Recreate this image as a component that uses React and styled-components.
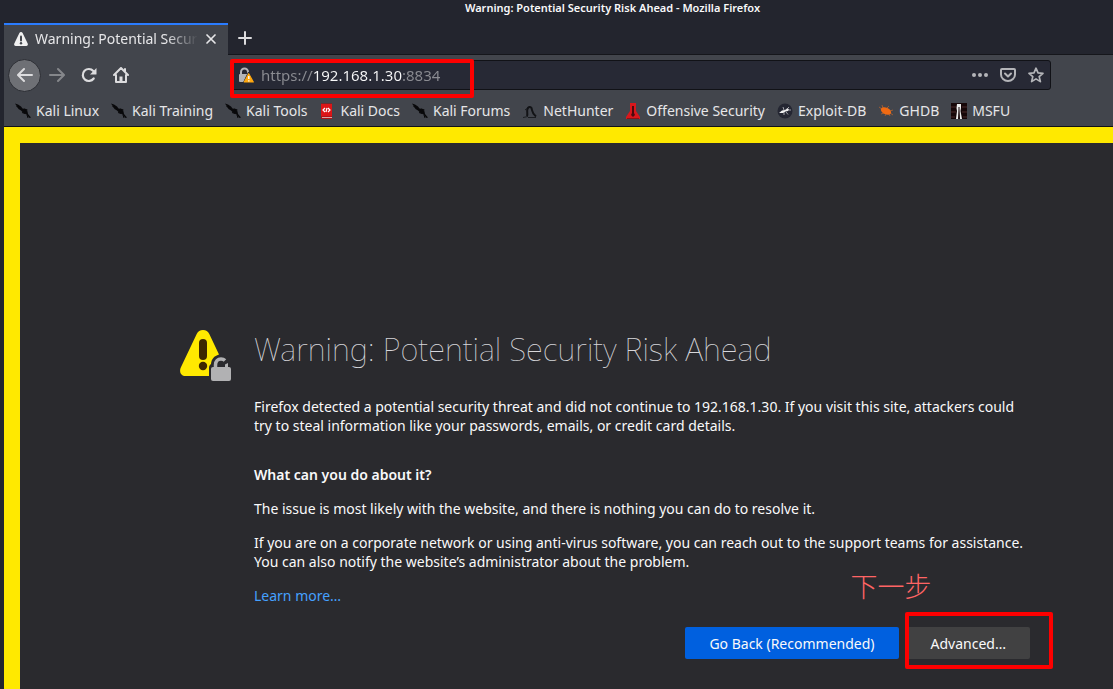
import React from 'react';
import styled, { createGlobalStyle } from 'styled-components';

const GlobalStyle = createGlobalStyle`
	* {
		box-sizing: border-box;
	}
	html,
	body,
	#root {
		height: 100%;
		margin: 0;
	}
	body {
		overflow: hidden;
		background-color: #23252e;
		color: #f9f9fa;
		font-family: 'Noto Sans', 'Noto Sans CJK SC', sans-serif;
		font-size: 14px;
	}
	button,
	input {
		font: inherit;
	}
	h1,
	h2,
	p {
		margin: 0;
	}
	svg {
		display: block;
		flex: none;
	}
`;

const Window = styled.div`
	display: flex;
	flex-direction: column;
	height: 100%;
	padding-left: 4px;
`;

const TitleBar = styled.header`
	height: 23px;
	padding-left: 108px;
	text-align: center;
	font-size: 11px;
	font-weight: 600;
	line-height: 16px;
`;

const TabStrip = styled.div`
	display: flex;
	height: 32px;
	border-bottom: 1px solid #15161b;
`;

const Tab = styled.div`
	display: flex;
	align-items: center;
	width: 224px;
	height: 32px;
	padding: 0 8px 3px 9px;
	background-color: #42454c;
	border-top: 2px solid #2a7cff;
	color: #e6e6e8;
	span {
		flex: 1;
		margin: 0 4px 0 6px;
		overflow: hidden;
		white-space: nowrap;
		mask-image: linear-gradient(to left, transparent, #000 32px);
	}
`;

const IconButton = styled.button`
	display: flex;
	align-items: center;
	justify-content: center;
	width: ${props => props.$size || 32}px;
	height: ${props => props.$size || 32}px;
	padding: 0;
	border: ${props => (props.$round ? '1px solid #2c2e34' : 0)};
	border-radius: ${props => (props.$round ? '50%' : '2px')};
	background-color: ${props => (props.$round ? '#6e7075' : 'transparent')};
	color: ${props => (props.disabled ? '#85878b' : '#dcdcde')};
`;

const NewTab = styled(IconButton)`
	height: 30px;
	margin-left: 1px;
`;

const NavBar = styled.nav`
	display: flex;
	align-items: center;
	height: 40px;
	padding: 0 62px 0 4px;
	background-color: #42454c;
`;

const AddressBar = styled.div`
	position: relative;
	display: flex;
	flex: 1;
	align-items: center;
	height: 30px;
	margin-left: 94px;
	padding: 0 0 0 6px;
	background-color: #272935;
	border: 1px solid #111217;
	border-radius: 3px;
	/* scheme and port are dimmed, the host stays bright */
	input {
		flex: 1;
		min-width: 0;
		padding: 0 0 0 7px;
		border: 0;
		outline: 0;
		color: transparent;
		font-size: 15px;
		background: linear-gradient(to right, #8b8c92 58px, #f9f9fa 58px, #f9f9fa 149px, #8b8c92 149px);
		background-clip: text;
	}
`;

const Highlight = styled.span`
	position: absolute;
	top: ${props => props.$top}px;
	left: ${props => props.$left}px;
	width: ${props => props.$width}px;
	height: ${props => props.$height}px;
	border: 4px solid #fe0000;
	border-radius: 2px;
	pointer-events: none;
`;

const Bookmarks = styled.nav`
	display: flex;
	align-items: center;
	gap: 12px;
	height: 32px;
	padding-left: 11px;
	background-color: #42454c;
	border-bottom: 1px solid #111217;
	a {
		display: flex;
		align-items: center;
		gap: 5px;
		color: #e6e6e8;
		line-height: 20px;
		text-decoration: none;
		white-space: nowrap;
	}
`;

const Page = styled.main`
	flex: 1;
	min-height: 0;
	padding: 180px 20px 0 160px;
	background-color: #2a2a2e;
	border-top: 16px solid #ffe900;
	border-left: 16px solid #ffe900;
	overflow: hidden;
`;

const Warning = styled.section`
	display: grid;
	grid-template-columns: 54px minmax(0, 776px);
	column-gap: 20px;
	& > svg {
		margin-top: 6px;
	}
	h1 {
		color: #d7d7db;
		font-size: 31px;
		font-weight: 100;
		line-height: 52px;
		white-space: nowrap;
	}
	h2 {
		margin-top: 30px;
		font-size: 14px;
		font-weight: 600;
		line-height: 19px;
	}
	p {
		margin-top: 15px;
		line-height: 19px;
	}
	h1 + p {
		margin-top: 22px;
	}
	a {
		color: #45a1ff;
		text-decoration: none;
	}
`;

const Actions = styled.div`
	display: flex;
	justify-content: flex-end;
	gap: 8px;
	margin-top: 22px;
`;

const ActionButton = styled.button`
	height: 32px;
	padding: 0 24px;
	border: 0;
	border-radius: 2px;
	background-color: ${props => (props.$primary ? '#0060df' : '#414142')};
	color: #f9f9fa;
`;

const AdvancedWrap = styled.div`
	position: relative;
	display: flex;
`;

const Note = styled.span`
	position: absolute;
	top: -55px;
	left: -56px;
	color: #ff6464;
	font-family: 'Noto Sans CJK SC', sans-serif;
	font-size: 27px;
	font-weight: 300;
	line-height: 27px;
	white-space: nowrap;
`;

const WarnGlyph = () => (
	<svg width="16" height="16" viewBox="0 0 16 16">
		<path d="M8 1c-.7 0-1.3.4-1.600 1L1.300 12.600c-.6 1.200.2 2.400 1.500 2.400h10.400c1.300 0 2.100-1.200 1.500-2.400L9.600 2c-.3-.6-.9-1-1.600-1z" fill="#f0f0f0" />
		<path d="M8 5.500v4" stroke="#42454c" strokeWidth="2" strokeLinecap="round" />
		<circle cx="8" cy="12.300" r="1.200" fill="#42454c" />
	</svg>
);

const CloseIcon = () => (
	<svg width="16" height="16" viewBox="0 0 16 16" stroke="#e6e6e8" strokeWidth="1.700" strokeLinecap="round">
		<path d="M4 4l8 8M12 4l-8 8" />
	</svg>
);

const PlusIcon = () => (
	<svg width="16" height="16" viewBox="0 0 16 16" stroke="currentColor" strokeWidth="2" strokeLinecap="round">
		<path d="M8 2v12M2 8h12" />
	</svg>
);

const ArrowIcon = ({ back }) => (
	<svg width="16" height="16" viewBox="0 0 16 16" fill="none" stroke="currentColor" strokeWidth="2" strokeLinecap="round" strokeLinejoin="round">
		{back ? <path d="M15 8H1.500M7 2L1 8l6 6" /> : <path d="M1 8h13.500M9 2l6 6-6 6" />}
	</svg>
);

const ReloadIcon = () => (
	<svg width="16" height="16" viewBox="0 0 16 16">
		<path d="M12.700 11.500A6 6 0 1 1 12.300 4" fill="none" stroke="currentColor" strokeWidth="2.200" strokeLinecap="round" />
		<path d="M15.500 1v6a.5.5 0 0 1-.5.500H9z" fill="currentColor" />
	</svg>
);

const HomeIcon = () => (
	<svg width="16" height="16" viewBox="0 0 16 16" fill="none" stroke="currentColor" strokeWidth="2" strokeLinecap="round" strokeLinejoin="round">
		<path d="M1 8l7-7 7 7M3 8v7h10V8" />
		<path d="M8 9.500v5" strokeWidth="3" strokeLinecap="butt" />
		<path d="M12 2v2" strokeWidth="2" />
	</svg>
);

const LockWarnIcon = () => (
	<svg width="16" height="16" viewBox="0 0 16 16">
		<path d="M3 8V5a3.500 3.500 0 0 1 7 0v2" fill="none" stroke="#b4b5b9" strokeWidth="2" />
		<rect x="1" y="7" width="10" height="8" rx="1" fill="#b4b5b9" />
		<path d="M10.500 5L5.500 15.500h10z" fill="#272935" stroke="#272935" />
		<path d="M10.700 6.700L6.300 15h9z" fill="#ffa810" stroke="#ffa810" strokeWidth="1.200" strokeLinejoin="round" />
		<path d="M10.800 9v3M10.800 13.300v1.300" stroke="#fff" strokeWidth="1.400" />
	</svg>
);

const DotsIcon = () => (
	<svg width="16" height="16" viewBox="0 0 16 16" fill="#b4b5b9">
		<circle cx="2" cy="8" r="2" />
		<circle cx="8" cy="8" r="2" />
		<circle cx="14" cy="8" r="2" />
	</svg>
);

const PocketIcon = () => (
	<svg width="16" height="16" viewBox="0 0 16 16" fill="none" stroke="#b4b5b9" strokeWidth="2" strokeLinecap="round" strokeLinejoin="round">
		<path d="M2 2h12a1 1 0 0 1 1 1v4.500a7 6.500 0 0 1-14 0V3a1 1 0 0 1 1-1z" />
		<path d="M5 6.500l3 3 3-3" />
	</svg>
);

const StarIcon = () => (
	<svg width="16" height="16" viewBox="0 0 16 16" fill="none" stroke="#b4b5b9" strokeWidth="1.700" strokeLinejoin="round">
		<path d="M8 1.200l2 4.700 5 .4-3.800 3.300 1.200 5L8 11.900l-4.400 2.700 1.200-5L1 6.300l5-.4z" />
	</svg>
);

const KaliIcon = () => (
	<svg width="16" height="16" viewBox="0 0 16 16">
		<path d="M0 .5l3 1 3 2 1.500 2L11 6l1.500 2.500L13 11l3 3.500-1.500.5-3-3.500L8.500 10 6 7.500 3.500 6 2 3.500z" fill="#08080a" />
		<path d="M1.500 3.500L6 5M9 6l3.500 1M7 9.500l3 1M12 12l1 3" stroke="#08080a" />
	</svg>
);

const DocsIcon = () => (
	<svg width="16" height="16" viewBox="0 0 16 16">
		<path d="M2 1l11-1v14H2z" fill="#dc1517" />
		<path d="M2 13h11v3H3a1 1 0 0 1-1-1z" fill="#b01215" />
		<path d="M3 14.500h10" stroke="#d9a5a6" />
		<path d="M2 0h11v1H2z" fill="#73292c" />
		<path d="M6 5L4 7l2 2M9 5l2 2-2 2M8 5L7 9" fill="none" stroke="#fff" strokeWidth="1.200" />
	</svg>
);

const NetHunterIcon = () => (
	<svg width="16" height="16" viewBox="0 0 16 16" fill="none" stroke="#121316">
		<path d="M5 13c1-3-.5-4 .5-7C6 4 8.500 3 9.500 5c1 3 0 5 4.500 8.500" strokeWidth="2" />
		<path d="M1 14.500l5-1M6 14.500h8M3 7l4-3" strokeWidth=".8" />
	</svg>
);

const OffsecIcon = () => (
	<svg width="16" height="16" viewBox="0 0 16 16">
		<path d="M5 0h6v8l4 6v2H1v-2l4-6z" fill="#d8171c" />
		<path d="M8 3v7" stroke="#4b0b0e" strokeWidth="2" />
		<path d="M8 8l-2 4 2 2 2-2z" fill="#4b0b0e" />
		<path d="M2 15.500h12" stroke="#8f1115" />
	</svg>
);

const ExploitIcon = () => (
	<svg width="16" height="16" viewBox="0 0 16 16">
		<circle cx="8" cy="8" r="7.500" fill="#242632" />
		<path d="M2 10l3-2.500 3-.5 2-1.500 2 .5-1 2-2.500.5L6 10z" fill="#f0f0f0" />
		<path d="M9 7l3-3M7 7L6 4M7 9v3M9 9l2 2.500M11 7h3" stroke="#d7d7db" strokeWidth=".7" />
	</svg>
);

const GhdbIcon = () => (
	<svg width="16" height="16" viewBox="0 0 16 16">
		<ellipse cx="8" cy="8" rx="5.500" ry="3.300" transform="rotate(25 8 8)" fill="#f06a13" />
		<path d="M4 6L1 4M5 5L4 2M9 5l2-2M12 8l3-1M12 10l3 2M6 10l-3 1M8 11l-1 2M11 11l1 2" stroke="#d96b25" strokeWidth=".6" />
	</svg>
);

const MsfuIcon = () => (
	<svg width="16" height="16" viewBox="0 0 16 16">
		<rect width="16" height="16" fill="#160708" />
		<path d="M0 4h5M11 4h5M0 9h5M11 9h5M0 14h4M12 14h4" stroke="#4a2a2a" />
		<path d="M6 1h4v4l-.5 3 1.500 8H9L8 6 7 16H5l1-8-.5-3z" fill="#eee" />
		<path d="M8 4v11" stroke="#160708" />
	</svg>
);

const WarningLockIcon = () => (
	<svg width="54" height="54" viewBox="0 0 54 54">
		<path d="M23 1c-3 0-5 1.300-6.300 4L.8 38.500C-1.200 43 1.200 47 5.500 47H29v-8c0-2 .7-3 2-4 .5-5 3-8 8-9.500L29.300 5C28 2.300 26 1 23 1z" fill="#ffe900" />
		<path d="M23 14v13" stroke="#3e2800" strokeWidth="8" strokeLinecap="round" />
		<circle cx="23" cy="37" r="4.200" fill="#3e2800" />
		<path d="M35.500 39v-3c0-4 2.500-6 5.500-6 1.500 0 3 .5 4 1.500" fill="none" stroke="#b1b1b3" strokeWidth="3.500" />
		<path d="M45 39v-3.500l3-1.500v5z" fill="#b1b1b3" />
		<rect x="31" y="38" width="20" height="14" rx="2" fill="#b1b1b3" />
	</svg>
);

const bookmarks = [
	{ name: 'Kali Linux', Icon: KaliIcon },
	{ name: 'Kali Training', Icon: KaliIcon },
	{ name: 'Kali Tools', Icon: KaliIcon },
	{ name: 'Kali Docs', Icon: DocsIcon },
	{ name: 'Kali Forums', Icon: KaliIcon },
	{ name: 'NetHunter', Icon: NetHunterIcon },
	{ name: 'Offensive Security', Icon: OffsecIcon },
	{ name: 'Exploit-DB', Icon: ExploitIcon },
	{ name: 'GHDB', Icon: GhdbIcon },
	{ name: 'MSFU', Icon: MsfuIcon },
];

const App = () => (
	<Window>
		<GlobalStyle />
		<TitleBar>Warning: Potential Security Risk Ahead - Mozilla Firefox</TitleBar>
		<TabStrip>
			<Tab>
				<WarnGlyph />
				<span>Warning: Potential Security Risk Ahead</span>
				<IconButton $size={18} aria-label="Close tab"><CloseIcon /></IconButton>
			</Tab>
			<NewTab aria-label="New tab"><PlusIcon /></NewTab>
		</TabStrip>
		<NavBar>
			<IconButton $round $size={33} aria-label="Back"><ArrowIcon back /></IconButton>
			<IconButton disabled aria-label="Forward"><ArrowIcon /></IconButton>
			<IconButton aria-label="Reload"><ReloadIcon /></IconButton>
			<IconButton aria-label="Home"><HomeIcon /></IconButton>
			<AddressBar>
				<LockWarnIcon />
				<input type="text" aria-label="Address" defaultValue="https://192.168.1.30:8834" />
				<IconButton $size={28} aria-label="Page actions"><DotsIcon /></IconButton>
				<IconButton $size={28} aria-label="Save to Pocket"><PocketIcon /></IconButton>
				<IconButton $size={28} aria-label="Bookmark"><StarIcon /></IconButton>
				<Highlight $top={-2} $left={-2} $width={244} $height={39} />
			</AddressBar>
		</NavBar>
		<Bookmarks>
			{bookmarks.map(({ name, Icon }) => (
				<a key={name} href="#bookmark"><Icon />{name}</a>
			))}
		</Bookmarks>
		<Page>
			<Warning>
				<WarningLockIcon />
				<div>
					<h1>Warning: Potential Security Risk Ahead</h1>
					<p>Firefox detected a potential security threat and did not continue to 192.168.1.30. If you visit this site, attackers could try to steal information like your passwords, emails, or credit card details.</p>
					<h2>What can you do about it?</h2>
					<p>The issue is most likely with the website, and there is nothing you can do to resolve it.</p>
					<p>If you are on a corporate network or using anti-virus software, you can reach out to the support teams for assistance. You can also notify the website’s administrator about the problem.</p>
					<p><a href="#learn-more">Learn more…</a></p>
					<Actions>
						<ActionButton $primary>Go Back (Recommended)</ActionButton>
						<AdvancedWrap>
							<ActionButton>Advanced…</ActionButton>
							<Highlight $top={-15} $left={-2} $width={148} $height={57} />
							<Note>下一步</Note>
						</AdvancedWrap>
					</Actions>
				</div>
			</Warning>
		</Page>
	</Window>
);

export default App;
